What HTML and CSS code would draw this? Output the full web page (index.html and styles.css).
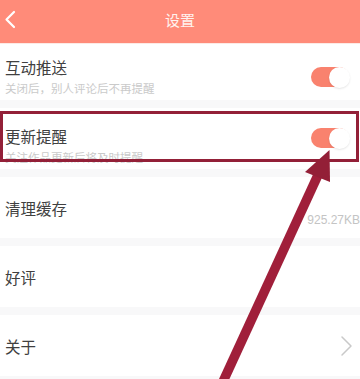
FILE: index.html
```html
<!DOCTYPE html>
<html lang="zh">
<head>
<meta charset="utf-8">
<title>设置</title>
<link rel="stylesheet" href="styles.css">
</head>
<body>
<div class="page">
  <header class="topbar">
    <svg class="back" width="20" height="40" viewBox="0 0 20 40"><path d="M14 12 L6.5 19.5 L14 27" fill="none" stroke="#ffffff" stroke-width="2.2" stroke-linecap="round" stroke-linejoin="round"/></svg>
    <h1 class="title">设置</h1>
  </header>
  <main class="list">
    <div class="row row-sub row-first">
      <div class="text">
        <div class="label">互动推送</div>
        <div class="hint">关闭后，别人评论后不再提醒</div>
      </div>
      <div class="toggle toggle-first"></div>
    </div>
    <div class="row row-sub row-second">
      <div class="text">
        <div class="label">更新提醒</div>
        <div class="hint">关注作品更新后将及时提醒</div>
      </div>
      <div class="toggle toggle-second"></div>
    </div>
    <div class="row row-plain row-cache">
      <div class="label">清理缓存</div>
      <div class="value">925.27KB</div>
    </div>
    <div class="row row-plain">
      <div class="label">好评</div>
    </div>
    <div class="row row-plain">
      <div class="label">关于</div>
      <svg class="chev" width="14" height="24" viewBox="0 0 14 24"><path d="M2 3 L11 12 L2 21" fill="none" stroke="#c9c9c9" stroke-width="1.5" stroke-linecap="round" stroke-linejoin="round"/></svg>
    </div>
  </main>
  <div class="highlight"></div>
  <svg class="arrow" width="360" height="379" viewBox="0 0 360 379">
    <line x1="221" y1="386" x2="318" y2="175" stroke="#a01f3a" stroke-width="9.5"/>
    <polygon points="329.5,150 330,182 305,172" fill="#931f37"/>
  </svg>
</div>
</body>
</html>
```

FILE: styles.css
```css
html, body {
  margin: 0;
  padding: 0;
  background: #ffffff;
}
body {
  font-family: "Noto Sans CJK SC", "Noto Sans", "Liberation Sans", sans-serif;
}
.page {
  position: relative;
  width: 360px;
  height: 379px;
  overflow: hidden;
  background: #f8f8f9;
}
.topbar {
  height: 43px;
  background: #ff8b79;
  display: flex;
  align-items: center;
  justify-content: center;
  position: relative;
  border-bottom: 1px solid #fdeae5;
}
.back {
  position: absolute;
  left: 0;
  top: 0;
}
.title {
  margin: 0;
  font-size: 15px;
  font-weight: 400;
  color: #fff3ef;
  line-height: 20px;
  margin-top: -3px;
}
.list {
  display: flex;
  flex-direction: column;
  gap: 8px;
}
.row {
  background: #ffffff;
  display: flex;
  padding: 0 11px 0 5px;
  box-sizing: border-box;
  height: 61px;
}
.row-first {
  height: 56px;
}
.row-plain {
  align-items: center;
}
.row-sub {
  align-items: flex-start;
  justify-content: space-between;
}
.row-first .text {
  padding-top: 13px;
}
.row-second .text {
  padding-top: 18px;
}
.label {
  font-size: 15.5px;
  line-height: 20px;
  color: #404040;
  flex: 1;
}
.hint {
  font-size: 11.5px;
  line-height: 16px;
  margin-top: 3px;
  color: #cacaca;
}
.toggle {
  position: relative;
  width: 38px;
  height: 20px;
  border-radius: 10px;
  background: #f9826e;
}
.toggle::after {
  content: "";
  position: absolute;
  right: -1px;
  top: -0.5px;
  width: 21px;
  height: 21px;
  border-radius: 50%;
  background: #ffffff;
  box-shadow: 0 1px 2px rgba(0, 0, 0, 0.1);
}
.toggle-first {
  margin-top: 23px;
}
.toggle-second {
  margin-top: 20px;
}
.row-cache {
  padding-right: 0;
}
.value {
  align-self: flex-end;
  margin-bottom: 10px;
  font-family: "Liberation Sans", "Noto Sans", sans-serif;
  font-size: 12px;
  line-height: 16px;
  color: #c4c4c4;
  white-space: nowrap;
}
.chev {
  margin-right: -5px;
}
.highlight {
  position: absolute;
  left: 0;
  top: 111px;
  width: 359px;
  height: 51px;
  box-sizing: border-box;
  border: 3px solid #932038;
}
.arrow {
  position: absolute;
  left: 0;
  top: 0;
}
```
